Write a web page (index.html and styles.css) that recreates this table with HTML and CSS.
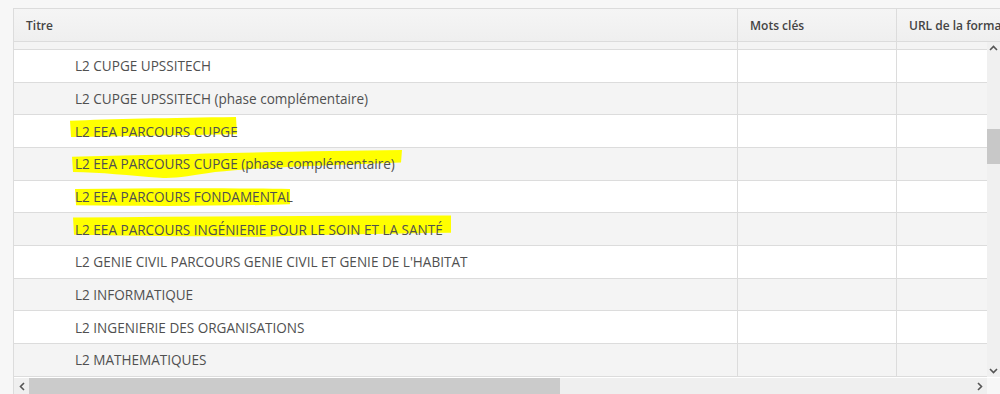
FILE: index.html
```html
<!DOCTYPE html>
<html lang="fr">
<head>
<meta charset="utf-8">
<title>Formations</title>
<link rel="stylesheet" href="styles.css">
</head>
<body>
<div class="grid">
  <div class="head">
    <div class="hc c1">Titre</div>
    <div class="hc c2">Mots clés</div>
    <div class="hc c3">URL de la formation</div>
  </div>
  <div class="main">
    <div class="viewport">
      <div class="rows">
        <div class="row alt"><div class="cell c1">L2 CUPGE MECANIQUE UPSSITECH (MECA)</div><div class="cell c2"></div><div class="cell c3"></div></div>
        <div class="row"><div class="cell c1">L2 CUPGE UPSSITECH</div><div class="cell c2"></div><div class="cell c3"></div></div>
        <div class="row alt"><div class="cell c1">L2 CUPGE UPSSITECH (phase complémentaire)</div><div class="cell c2"></div><div class="cell c3"></div></div>
        <div class="row"><div class="cell c1">
          <svg class="mark" viewBox="14 115 723 33" preserveAspectRatio="none"><path d="M70,121 C110,119 170,118 236,117 L237,135 C180,136 120,137 71,138 Z"/></svg>
          <span class="txt">L2 EEA PARCOURS CUPGE</span></div><div class="cell c2"></div><div class="cell c3"></div></div>
        <div class="row alt"><div class="cell c1">
          <svg class="mark" viewBox="14 148 723 33" preserveAspectRatio="none"><path d="M72,157 C160,155 300,151 402,150 L401,163 C330,166 260,168 215,173 C190,177 175,180 160,179 C130,177 100,173 73,173 Z"/></svg>
          <span class="txt">L2 EEA PARCOURS CUPGE (phase complémentaire)</span></div><div class="cell c2"></div><div class="cell c3"></div></div>
        <div class="row"><div class="cell c1">
          <svg class="mark" viewBox="14 180.67 723 33" preserveAspectRatio="none"><path d="M75,189 C150,188 230,188 290,189 L290,205 C220,207 150,207 76,206 Z"/></svg>
          <span class="txt">L2 EEA PARCOURS FONDAMENTAL</span></div><div class="cell c2"></div><div class="cell c3"></div></div>
        <div class="row alt"><div class="cell c1">
          <svg class="mark" viewBox="14 213.33 723 33" preserveAspectRatio="none"><path d="M73,218 C200,217 330,216 451,216 L451,234 C380,235 320,236 265,238 C200,238 130,237 74,236 Z"/></svg>
          <span class="txt">L2 EEA PARCOURS INGÉNIERIE POUR LE SOIN ET LA SANTÉ</span></div><div class="cell c2"></div><div class="cell c3"></div></div>
        <div class="row"><div class="cell c1">L2 GENIE CIVIL PARCOURS GENIE CIVIL ET GENIE DE L'HABITAT</div><div class="cell c2"></div><div class="cell c3"></div></div>
        <div class="row alt"><div class="cell c1">L2 INFORMATIQUE</div><div class="cell c2"></div><div class="cell c3"></div></div>
        <div class="row"><div class="cell c1">L2 INGENIERIE DES ORGANISATIONS</div><div class="cell c2"></div><div class="cell c3"></div></div>
        <div class="row alt"><div class="cell c1">L2 MATHEMATIQUES</div><div class="cell c2"></div><div class="cell c3"></div></div>
      </div>
    </div>
    <div class="vbar">
      <div class="arrow"><svg width="9" height="6" viewBox="0 0 9 6"><path d="M1,5 L4.5,1.5 L8,5"/></svg></div>
      <div class="vtrack"><div class="vthumb"></div></div>
      <div class="arrow"><svg width="9" height="6" viewBox="0 0 9 6"><path d="M1,1 L4.5,4.5 L8,1"/></svg></div>
    </div>
  </div>
  <div class="hbar">
    <div class="harrow"><svg width="6" height="9" viewBox="0 0 6 9"><path d="M5,1 L1.5,4.5 L5,8"/></svg></div>
    <div class="hthumb"></div>
    <div class="hspace"></div>
    <div class="harrow"><svg width="6" height="9" viewBox="0 0 6 9"><path d="M1,1 L4.5,4.5 L1,8"/></svg></div>
    <div class="corner"></div>
  </div>
</div>
</body>
</html>
```

FILE: styles.css
```css
html, body {
  margin: 0;
  padding: 0;
}
body {
  background: #f7f7f7;
  font-family: "Open Sans", "Noto Sans", sans-serif;
  color: #505050;
  width: 1000px;
  height: 394px;
  overflow: hidden;
}
.grid {
  margin: 8px 0 0 13px;
  border-left: 1px solid #dcdcdc;
  border-top: 1px solid #dcdcdc;
  background: #fff;
  height: 386px;
  display: flex;
  flex-direction: column;
  overflow: hidden;
}
.head {
  display: flex;
  flex: none;
  height: 33px;
  box-sizing: border-box;
  border-bottom: 1px solid #dcdcdc;
  background: linear-gradient(#f5f5f5, #efefef);
}
.hc {
  box-sizing: border-box;
  border-right: 1px solid #dcdcdc;
  padding-left: 12px;
  font-size: 12px;
  font-weight: 600;
  color: #444;
  display: flex;
  align-items: center;
  white-space: nowrap;
  overflow: hidden;
  flex: none;
}
.c1 { width: 724px; flex: none; }
.c2 { width: 159px; flex: none; }
.hc.c3 { width: 200px; }
.main {
  display: flex;
  flex: none;
  height: 335px;
}
.viewport {
  flex: 1;
  overflow: hidden;
}
.rows {
  margin-top: -24.67px;
}
.row {
  display: flex;
  height: 32.67px;
  box-sizing: border-box;
  border-bottom: 1px solid #dcdcdc;
  background: #fff;
}
.row.alt {
  background: #f4f4f4;
}
.cell {
  box-sizing: border-box;
  border-right: 1px solid #dcdcdc;
}
.cell.c1 {
  position: relative;
  padding-left: 61px;
  padding-top: 1px;
  display: flex;
  align-items: center;
  font-size: 13.55px;
  white-space: nowrap;
}
.cell.c3 {
  flex: 1;
  border-right: none;
}
.mark {
  position: absolute;
  left: 0;
  top: 0;
  width: 723px;
  height: 100%;
  fill: #ffff00;
}
.txt {
  position: relative;
}
.vbar {
  width: 13px;
  flex: none;
  background: #f0f0f0;
  display: flex;
  flex-direction: column;
}
.arrow {
  height: 12px;
  display: flex;
  align-items: center;
  justify-content: center;
}
.arrow svg, .harrow svg {
  fill: none;
  stroke: #555;
  stroke-width: 1.6;
}
.vtrack {
  flex: 1;
}
.vthumb {
  margin-top: 75px;
  height: 35px;
  background: #c8c8c8;
}
.hbar {
  flex: none;
  display: flex;
  height: 17px;
  box-sizing: border-box;
  border-top: 1px solid #fff;
  background: #efefef;
}
.harrow {
  width: 15px;
  display: flex;
  align-items: center;
  justify-content: center;
}
.hthumb {
  width: 531px;
  background: #cbcbcb;
}
.hspace {
  flex: 1;
}
.corner {
  width: 13px;
  background: #f7f7f7;
}
```
